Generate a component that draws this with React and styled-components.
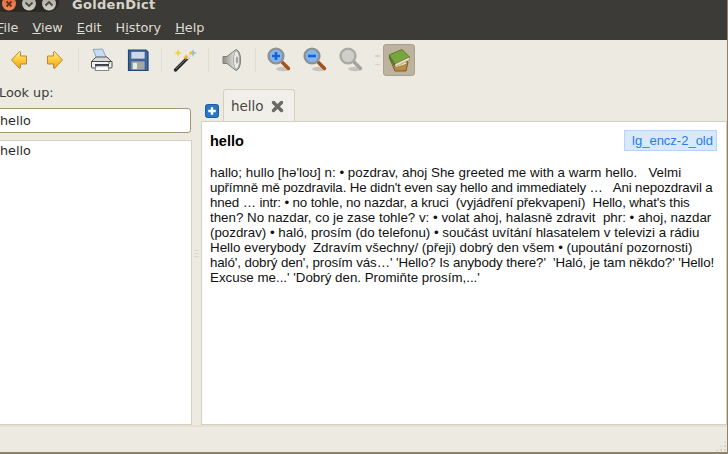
import React from "react";
import styled, { createGlobalStyle } from "styled-components";

const GlobalStyle = createGlobalStyle`
  html, body {
    margin: 0;
    padding: 0;
    width: 728px;
    height: 454px;
    overflow: hidden;
    background: #ffffff;
  }
`;

// spacing evens out the hinted glyph widths of the original rendering
const ARTICLE_LINES = [
  { text: "hallo; hullo [hə'loʊ] n: • pozdrav, ahoj She greeted me with a warm hello.   Velmi", spacing: 0.03 },
  { text: "upřímně mě pozdravila. He didn't even say hello and immediately …   Ani nepozdravil a", spacing: -0.14 },
  { text: "hned … intr: • no tohle, no nazdar, a kruci  (vyjádření překvapení)  Hello, what's this", spacing: -0.14 },
  { text: "then? No nazdar, co je zase tohle? v: • volat ahoj, halasně zdravit  phr: • ahoj, nazdar", spacing: 0 },
  { text: "(pozdrav) • haló, prosím (do telefonu) • součást uvítání hlasatelem v televizi a rádiu", spacing: 0 },
  { text: "Hello everybody  Zdravím všechny/ (přeji) dobrý den všem • (upoutání pozornosti)", spacing: 0 },
  { text: "haló', dobrý den', prosím vás…' 'Hello? Is anybody there?'  'Haló, je tam někdo?' 'Hello!", spacing: -0.1 },
  { text: "Excuse me...' 'Dobrý den. Promiňte prosím,...'", spacing: 0 },
];

const WindowControls = () => (
  <svg width="60" height="14" viewBox="0 0 60 14">
    <defs>
      <linearGradient id="closeFill" x1="0" y1="0" x2="0" y2="1">
        <stop offset="0" stopColor="#d9683f" />
        <stop offset="1" stopColor="#f08a5a" />
      </linearGradient>
      <linearGradient id="grayFill" x1="0" y1="0" x2="0" y2="1">
        <stop offset="0" stopColor="#a8a59c" />
        <stop offset="1" stopColor="#d2cfc6" />
      </linearGradient>
    </defs>
    <rect x="-6" y="-10" width="65" height="22" rx="10" fill="#2b2a27" />
    <circle cx="9" cy="3.5" r="7" fill="url(#closeFill)" />
    <path d="M6.5 1.5 L11.5 6.5 M11.5 1.5 L6.5 6.5" stroke="#6b2a12" strokeWidth="1.8" />
    <circle cx="29" cy="3.5" r="7" fill="url(#grayFill)" />
    <path d="M25.5 2.5 L29 6 L32.5 2.5" stroke="#4b4a45" strokeWidth="1.8" fill="none" />
    <circle cx="49" cy="3.5" r="7" fill="url(#grayFill)" />
    <path d="M45.5 5.5 L49 2 L52.5 5.5" stroke="#4b4a45" strokeWidth="1.8" fill="none" />
  </svg>
);

const ArrowIcon = ({ flip }) => (
  <svg width="18" height="20" viewBox="0 0 18 20" style={flip ? { transform: "scaleX(-1)" } : undefined}>
    <defs>
      <linearGradient id="arrowFill" x1="0" y1="0" x2="0" y2="1">
        <stop offset="0" stopColor="#fff08a" />
        <stop offset="0.5" stopColor="#fcc93a" />
        <stop offset="1" stopColor="#eea411" />
      </linearGradient>
    </defs>
    <path d="M9.5 1.5 L1.5 10 L9.5 18.5 L10.5 18 V14 H16.5 V6 H10.5 V2 Z" fill="url(#arrowFill)" stroke="#b58a3e" strokeWidth="1" strokeLinejoin="round" />
  </svg>
);

const PrinterIcon = () => (
  <svg width="24" height="24" viewBox="0 0 24 24">
    <path d="M3 1.5 L12.5 1 L16 9 L7 11 Z" fill="#c5dcf5" stroke="#7b93ad" strokeWidth="0.8" />
    <path d="M2 13 L6 9 H17 L21 13 V19 H2 Z" fill="#d8d8d4" stroke="#55565a" strokeWidth="1" />
    <path d="M1.5 13.5 H22 V19 Q22 20 21 20 H2.5 Q1.5 20 1.5 19 Z" fill="#f1f1ef" stroke="#47484c" strokeWidth="1" />
    <rect x="5" y="16" width="14" height="2.5" fill="#3c3d40" />
    <path d="M6 18 H18 L19 22.5 H5 Z" fill="#fbfbfb" stroke="#6b6c70" strokeWidth="0.8" />
    <circle cx="19" cy="15" r="0.9" fill="#6fa64a" />
  </svg>
);

const FloppyIcon = () => (
  <svg width="22" height="24" viewBox="0 0 22 24">
    <path d="M1.5 2 H19 L21 4 V22.5 H1.5 Z" fill="#3f6aa3" stroke="#1f4475" strokeWidth="1.2" />
    <rect x="4" y="3.5" width="14" height="7.5" fill="#cfd8e4" stroke="#34547f" strokeWidth="0.6" />
    <rect x="4" y="13" width="14" height="9" fill="#a3a6a6" stroke="#34547f" strokeWidth="0.6" />
    <rect x="6" y="15" width="4" height="6" fill="#e9e9e6" />
  </svg>
);

const WandIcon = () => (
  <svg width="24" height="24" viewBox="0 0 24 24">
    <path d="M2.5 22 L15 9.5" stroke="#2b2b2d" strokeWidth="3.2" strokeLinecap="round" />
    <path d="M14 10.5 L17.5 7" stroke="#dfe0e2" strokeWidth="3.2" />
    <path d="M3 21 L14 10" stroke="#77787c" strokeWidth="0.8" />
    <path d="M5 1 L6 4 L9 5 L6 6 L5 9 L4 6 L1 5 L4 4 Z" fill="#efd12f" />
    <path d="M13 6 L14 8.5 L16 9 L14 10 L13 12 L12 10 L10 9 L12 8.5 Z" fill="#edb325" />
    <path d="M20 1 L21 4 L24 5 L21 6 L20 9 L19 6 L16 5 L19 4 Z" fill="#8ab8e0" />
    <path d="M18 3 L20 5 L18 7 L16 5 Z" fill="#e8c52a" />
  </svg>
);

const SpeakerIcon = () => (
  <svg width="20" height="24" viewBox="0 0 20 24">
    <defs>
      <linearGradient id="speakerFill" x1="0" y1="0" x2="1" y2="0">
        <stop offset="0" stopColor="#8d8d88" />
        <stop offset="0.6" stopColor="#d8d8d2" />
        <stop offset="1" stopColor="#a5a5a0" />
      </linearGradient>
    </defs>
    <path d="M1 8.5 H5 L14 1.5 Q18.5 3 18.5 12 Q18.5 21 14 22.5 L5 15.5 H1 Z" fill="url(#speakerFill)" stroke="#7e7e7a" strokeWidth="1" />
    <ellipse cx="14.5" cy="12" rx="3" ry="9" fill="#ecece6" stroke="#9c9c97" strokeWidth="0.8" />
    <ellipse cx="15" cy="12" rx="1.2" ry="3.5" fill="#a4a49f" />
  </svg>
);

const MagnifierIcon = ({ id, lens, ring, handle, mark }) => (
  <svg width="24" height="25" viewBox="0 0 24 25">
    <defs>
      <radialGradient id={id} cx="0.5" cy="0.45" r="0.6">
        <stop offset="0" stopColor={lens} />
        <stop offset="0.75" stopColor={lens} />
        <stop offset="1" stopColor="#ffffff" />
      </radialGradient>
    </defs>
    <ellipse cx="16" cy="22" rx="7" ry="2.2" fill="#b8b4ac" opacity="0.7" />
    <path d="M15 15 L21.5 21.5" stroke={handle} strokeWidth="3.4" strokeLinecap="round" />
    <circle cx="9" cy="9" r="7.4" fill={`url(#${id})`} stroke={ring} strokeWidth="2.4" />
    {mark === "plus" && <path d="M5 9 H13 M9 5 V13" stroke="#1c5fd0" strokeWidth="2.6" />}
    {mark === "minus" && <path d="M5 9 H13" stroke="#1c5fd0" strokeWidth="2.6" />}
  </svg>
);

const BooksIcon = () => (
  <svg width="24" height="24" viewBox="0 0 24 24">
    <path d="M2 9 L14 6 L21 14 L19 23 L8 23 Z" fill="#b78d45" stroke="#6c4a1e" strokeWidth="0.8" />
    <path d="M3 9 L17 8 L20 16 L8 20 Z" fill="#f1e3bd" stroke="#8b6a33" strokeWidth="0.6" />
    <path d="M2 7 L15 1.5 L22.5 9 L8 16 Z" fill="#77a53e" stroke="#496f22" strokeWidth="0.8" />
    <path d="M2 7 L8 16 L8 19 L2 10 Z" fill="#4e7a28" />
    <path d="M8 16 L22.5 9 V12 L8 19 Z" fill="#e7ddbf" stroke="#7d6a3c" strokeWidth="0.5" />
  </svg>
);

const CloseIcon = () => (
  <svg width="13" height="13" viewBox="0 0 13 13">
    <path d="M2.5 2.5 L10.5 10.5 M10.5 2.5 L2.5 10.5" stroke="#6a6a66" strokeWidth="3.4" strokeLinecap="round" />
  </svg>
);

const PlusIcon = () => (
  <svg width="14" height="14" viewBox="0 0 14 14">
    <rect x="0.5" y="0.5" width="13" height="13" rx="2" fill="#2a76c6" stroke="#1d5c9e" />
    <path d="M3.2 7 H10.8 M7 3.2 V10.8" stroke="#ffffff" strokeWidth="2.4" />
  </svg>
);

const App = () => {
  return (
    <Window>
      <GlobalStyle />
      <TitleBar>
        <WindowControls />
        <Title>GoldenDict</Title>
      </TitleBar>
      <MenuBar>
        <MenuItem><u>F</u>ile</MenuItem>
        <MenuItem><u>V</u>iew</MenuItem>
        <MenuItem><u>E</u>dit</MenuItem>
        <MenuItem>H<u>i</u>story</MenuItem>
        <MenuItem><u>H</u>elp</MenuItem>
      </MenuBar>
      <ToolBar>
        <ToolButton><ArrowIcon /></ToolButton>
        <ToolButton><ArrowIcon flip /></ToolButton>
        <ToolSeparator />
        <ToolButton><PrinterIcon /></ToolButton>
        <ToolButton><FloppyIcon /></ToolButton>
        <ToolSeparator />
        <ToolButton><WandIcon /></ToolButton>
        <ToolSeparator />
        <ToolButton><SpeakerIcon /></ToolButton>
        <ToolSeparator />
        <ToolButton><MagnifierIcon id="lensIn" lens="#7fb6ee" ring="#8d9196" handle="#a5531c" mark="plus" /></ToolButton>
        <ToolButton><MagnifierIcon id="lensOut" lens="#7fb6ee" ring="#8d9196" handle="#a5531c" mark="minus" /></ToolButton>
        <ToolButton><MagnifierIcon id="lensOff" lens="#cfcec9" ring="#a9a9a5" handle="#a3a3a0" /></ToolButton>
        <ToolHandle />
        <ActiveToolButton><BooksIcon /></ActiveToolButton>
      </ToolBar>
      <Body>
        <LeftPanel>
          <LookUpLabel>Look up:</LookUpLabel>
          <SearchInput>hello</SearchInput>
          <WordList>hello</WordList>
        </LeftPanel>
        <Splitter><SplitterGrip /></Splitter>
        <RightPanel>
          <TabRow>
            <AddTab><PlusIcon /></AddTab>
            <Tab>
              hello
              <CloseIcon />
            </Tab>
          </TabRow>
          <Pane>
            <ArticleHeader>
              <Word>hello</Word>
              <DictName>lg_encz-2_old</DictName>
            </ArticleHeader>
            <Article>
              {ARTICLE_LINES.map((line) => (
                <ArticleLine key={line.text} $spacing={line.spacing}>{line.text}</ArticleLine>
              ))}
            </Article>
          </Pane>
        </RightPanel>
      </Body>
      <StatusBar>
        <SizeGrip />
      </StatusBar>
    </Window>
  );
};

const Window = styled.div`
  width: 728px;
  height: 454px;
  box-sizing: border-box;
  display: flex;
  flex-direction: column;
  overflow: hidden;
  background: #edeae2;
  border-right: 1px solid #8f8268;
  border-bottom: 2px solid #8f8268;
  font-family: "DejaVu Sans", sans-serif;
  font-size: 12.8px;
  color: #3c3b37;
`;

const TitleBar = styled.div`
  height: 14px;
  flex: none;
  display: flex;
  align-items: flex-end;
  overflow: hidden;
  background: #3c3b37;
`;

const Title = styled.div`
  margin-left: 12px;
  margin-bottom: 1px;
  color: #d8d4ca;
  font-weight: bold;
  font-size: 13px;
  line-height: 16px;
  letter-spacing: 0.3px;
`;

const MenuBar = styled.div`
  height: 26px;
  flex: none;
  display: flex;
  align-items: center;
  gap: 14px;
  box-sizing: border-box;
  padding: 1px 0 0 0;
  margin-left: -3px;
  background: #3c3b37;
  color: #dfdbd2;
`;

const MenuItem = styled.div`
  line-height: 18px;
`;

const ToolBar = styled.div`
  height: 43px;
  flex: none;
  box-sizing: border-box;
  display: flex;
  align-items: center;
  padding: 0 0 4px 1px;
`;

const ToolButton = styled.div`
  width: 36px;
  height: 32px;
  display: flex;
  align-items: center;
  justify-content: center;
`;

const ToolSeparator = styled.div`
  width: 1px;
  height: 24px;
  margin: 0 5px;
  background: #e0dccf;
`;

const ToolHandle = styled.div`
  width: 5px;
  height: 8px;
  margin: 0 3px 0 6px;
  border-top: 1px solid #d8d3c6;
  border-bottom: 1px solid #d8d3c6;
  box-shadow: inset 0 3px 0 -2px #d8d3c6;
`;

const ActiveToolButton = styled(ToolButton)`
  width: 32px;
  height: 32px;
  box-sizing: border-box;
  border: 1px solid #ada18b;
  border-radius: 3px;
  background: #bdb29e;
`;

const Body = styled.div`
  flex: 1;
  min-height: 0;
  display: flex;
`;

const LeftPanel = styled.div`
  width: 198px;
  margin-left: -6px;
  flex: none;
  display: flex;
  flex-direction: column;
`;

const LookUpLabel = styled.div`
  height: 25px;
  padding-left: 5px;
  line-height: 19px;
`;

const SearchInput = styled.div`
  width: 197px;
  height: 25px;
  box-sizing: border-box;
  padding-left: 5px;
  border: 1px solid #a59673;
  border-radius: 3px;
  background: #ffffff;
  color: #2a2a26;
  line-height: 23px;
`;

const WordList = styled.div`
  flex: 1;
  margin-top: 7px;
  padding-left: 5px;
  border: 1px solid #d5cfbf;
  background: #ffffff;
  color: #2a2a26;
  line-height: 19px;
`;

const Splitter = styled.div`
  width: 9px;
  flex: none;
  display: flex;
  align-items: center;
  justify-content: center;
`;

const SplitterGrip = styled.div`
  width: 5px;
  height: 9px;
  margin-left: -1px;
  background: repeating-linear-gradient(#dcd7ca 0 1px, transparent 1px 3px);
`;

const RightPanel = styled.div`
  flex: 1;
  min-width: 0;
  display: flex;
  flex-direction: column;
`;

const TabRow = styled.div`
  height: 39px;
  flex: none;
  display: flex;
  align-items: flex-end;
`;

const AddTab = styled.div`
  display: flex;
  margin: 0 4px 4px 4px;
`;

const Tab = styled.div`
  width: 72px;
  height: 33px;
  box-sizing: border-box;
  display: flex;
  align-items: center;
  gap: 7px;
  padding-left: 7px;
  border: 1px solid #d5cfbf;
  border-bottom: none;
  border-radius: 3px 3px 0 0;
  background: #f1efe9;
  font-size: 13.5px;
  color: #4a4842;
`;

const Pane = styled.div`
  flex: 1;
  min-height: 0;
  border: 1px solid #d5cfbf;
  margin-top: -1px;
  background: #ffffff;
  padding: 7px 9px 0 8px;
  font-family: "Liberation Sans", Arial, sans-serif;
  color: #111111;
`;

const ArticleHeader = styled.div`
  display: flex;
  align-items: center;
  justify-content: space-between;
  height: 22px;
`;

const Word = styled.div`
  padding-top: 2px;
  font-weight: bold;
  font-size: 14.5px;
  color: #000000;
`;

const DictName = styled.div`
  height: 21px;
  box-sizing: border-box;
  padding: 0 3px 0 7px;
  border: 1px solid #b5d4fa;
  background: #d8e9fd;
  color: #2a79e6;
  font-size: 13px;
  line-height: 19px;
`;

const Article = styled.div`
  margin-top: 14px;
  font-size: 13.33px;
  line-height: 15px;
`;

const ArticleLine = styled.div`
  white-space: pre;
  letter-spacing: ${(p) => p.$spacing}px;
`;

const StatusBar = styled.div`
  height: 27px;
  flex: none;
  display: flex;
  justify-content: flex-end;
  align-items: flex-end;
  box-sizing: border-box;
  border-top: 2px solid #e5e1d6;
`;

const SizeGrip = styled.div`
  width: 12px;
  height: 12px;
  background-image: radial-gradient(#d6d1c4 1px, transparent 1px);
  background-size: 4px 4px;
  clip-path: polygon(100% 0, 100% 100%, 0 100%);
`;

export default App;
